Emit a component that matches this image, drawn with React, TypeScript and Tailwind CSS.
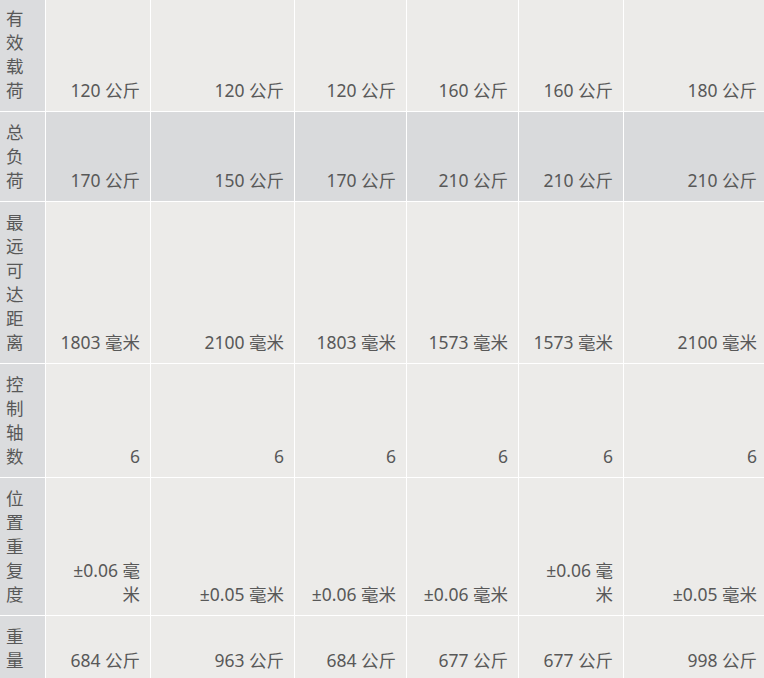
const cols = ["w-[104px]", "w-[143px]", "w-[111px]", "w-[111px]", "w-[104px]", "w-[143px]"];

// "\n" marks where the narrow columns wrap in the reference
const rows: { label: string; values: string[]; alt?: boolean }[] = [
  { label: "有效载荷", values: ["120 公斤", "120 公斤", "120 公斤", "160 公斤", "160 公斤", "180 公斤"] },
  { label: "总负荷", values: ["170 公斤", "150 公斤", "170 公斤", "210 公斤", "210 公斤", "210 公斤"], alt: true },
  { label: "最远可达距离", values: ["1803 毫米", "2100 毫米", "1803 毫米", "1573 毫米", "1573 毫米", "2100 毫米"] },
  { label: "控制轴数", values: ["6", "6", "6", "6", "6", "6"] },
  { label: "位置重复度", values: ["±0.06 毫\n米", "±0.05 毫米", "±0.06 毫米", "±0.06 毫米", "±0.06 毫\n米", "±0.05 毫米"] },
  { label: "重量", values: ["684 公斤", "963 公斤", "684 公斤", "677 公斤", "677 公斤", "998 公斤"] },
];

export default function App() {
  return (
    <div
      className="w-[764px] h-[678px] overflow-hidden bg-white text-[17.5px] leading-[24px] text-[#585858]"
      style={{ fontFamily: '"Noto Sans", "Noto Sans CJK SC", sans-serif' }}
    >
      <div className="-mt-[2px] w-[767px] grid grid-cols-[45px_104px_143px_111px_111px_104px_143px] gap-px bg-white">
        {rows.map((row) => (
          <>
            <div key={row.label} className="bg-[#dbdcde] pl-[6px] pt-2 pb-[9px]">
              <div className="w-[18px] break-all">{row.label}</div>
            </div>
            {row.values.map((v, i) => (
              <div
                key={row.label + i}
                className={`${cols[i]} flex flex-col justify-end text-right whitespace-pre pl-[12px] pr-[10px] pt-2 pb-[9px] ${
                  row.alt ? "bg-[#d9dadc]" : "bg-[#ecebe9]"
                }`}
              >
                {v}
              </div>
            ))}
          </>
        ))}
      </div>
    </div>
  );
}
